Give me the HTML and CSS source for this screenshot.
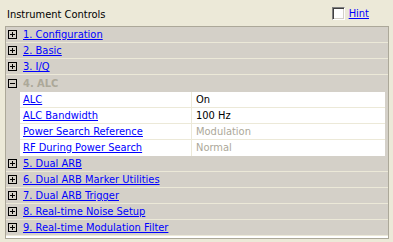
FILE: index.html
```html
<!DOCTYPE html>
<html lang="en">
<head>
  <meta charset="UTF-8">
  <title>Instrument Controls</title>
  <link rel="stylesheet" href="styles.css">
</head>
<body>

  <div class="top-bar">
    <span class="title">Instrument Controls</span>
    <label class="hint">
      <span class="check-box"></span>
      <a href="#">Hint</a>
    </label>
  </div>

  <div class="panel">
    <div class="group">
      <svg class="toggle" width="9" height="9" viewBox="0 0 9 9"><rect x="0.5" y="0.5" width="8" height="8" fill="none" stroke="#000"/><path d="M2 4.5h5M4.5 2v5" stroke="#000"/></svg>
      <a href="#">1. Configuration</a>
    </div>
    <div class="group">
      <svg class="toggle" width="9" height="9" viewBox="0 0 9 9"><rect x="0.5" y="0.5" width="8" height="8" fill="none" stroke="#000"/><path d="M2 4.5h5M4.5 2v5" stroke="#000"/></svg>
      <a href="#">2. Basic</a>
    </div>
    <div class="group">
      <svg class="toggle" width="9" height="9" viewBox="0 0 9 9"><rect x="0.5" y="0.5" width="8" height="8" fill="none" stroke="#000"/><path d="M2 4.5h5M4.5 2v5" stroke="#000"/></svg>
      <a href="#">3. I/Q</a>
    </div>

    <div class="group open">
      <svg class="toggle" width="9" height="9" viewBox="0 0 9 9"><rect x="0.5" y="0.5" width="8" height="8" fill="none" stroke="#000"/><path d="M2 4.5h5" stroke="#000"/></svg>
      <span class="current">4. ALC</span>
    </div>
    <div class="params">
      <div class="param">
        <a class="name" href="#">ALC</a>
        <span class="value">On</span>
      </div>
      <div class="param">
        <a class="name" href="#">ALC Bandwidth</a>
        <span class="value">100 Hz</span>
      </div>
      <div class="param">
        <a class="name" href="#">Power Search Reference</a>
        <span class="value off">Modulation</span>
      </div>
      <div class="param">
        <a class="name" href="#">RF During Power Search</a>
        <span class="value off">Normal</span>
      </div>
    </div>

    <div class="group">
      <svg class="toggle" width="9" height="9" viewBox="0 0 9 9"><rect x="0.5" y="0.5" width="8" height="8" fill="none" stroke="#000"/><path d="M2 4.5h5M4.5 2v5" stroke="#000"/></svg>
      <a href="#">5. Dual ARB</a>
    </div>
    <div class="group">
      <svg class="toggle" width="9" height="9" viewBox="0 0 9 9"><rect x="0.5" y="0.5" width="8" height="8" fill="none" stroke="#000"/><path d="M2 4.5h5M4.5 2v5" stroke="#000"/></svg>
      <a href="#">6. Dual ARB Marker Utilities</a>
    </div>
    <div class="group">
      <svg class="toggle" width="9" height="9" viewBox="0 0 9 9"><rect x="0.5" y="0.5" width="8" height="8" fill="none" stroke="#000"/><path d="M2 4.5h5M4.5 2v5" stroke="#000"/></svg>
      <a href="#">7. Dual ARB Trigger</a>
    </div>
    <div class="group">
      <svg class="toggle" width="9" height="9" viewBox="0 0 9 9"><rect x="0.5" y="0.5" width="8" height="8" fill="none" stroke="#000"/><path d="M2 4.5h5M4.5 2v5" stroke="#000"/></svg>
      <a href="#">8. Real-time Noise Setup</a>
    </div>
    <div class="group">
      <svg class="toggle" width="9" height="9" viewBox="0 0 9 9"><rect x="0.5" y="0.5" width="8" height="8" fill="none" stroke="#000"/><path d="M2 4.5h5M4.5 2v5" stroke="#000"/></svg>
      <a href="#">9. Real-time Modulation Filter</a>
    </div>
  </div>

</body>
</html>
```

FILE: styles.css
```css
/* General */
body {
  margin: 0;
  background: #ece9d8;
  font-family: "DejaVu Sans Condensed", "DejaVu Sans", sans-serif;
  font-size: 11px;
  color: #000;
}

a {
  color: #0000ff;
  text-decoration: underline;
}

/* Top bar */
.top-bar {
  display: flex;
  align-items: center;
  justify-content: space-between;
  height: 26px;
  padding: 0 24px 0 7px;
  box-sizing: border-box;
}

.title {
  padding-top: 2px;
}

.hint {
  display: flex;
  align-items: center;
  gap: 4px;
  margin-top: 1px;
}

.check-box {
  width: 11px;
  height: 11px;
  background: #fff;
  border: 1px solid;
  border-color: #808080 #fff #fff #808080;
  box-shadow: inset 1px 1px 0 #404040, inset -1px -1px 0 #d4d0c8;
}

/* Panel */
.panel {
  margin: 0 4px 0 5px;
  height: 213px;
  border: 1px solid #aca899;
  background: #fff;
  box-sizing: border-box;
}

.group {
  display: flex;
  align-items: center;
  height: 16px;
  padding: 0 0 0 1px;
  background: #d4d0c8;
  border-bottom: 1px solid #ece9d8;
  box-sizing: border-box;
}

.group.open {
  border-bottom: none;
}

.toggle {
  margin: 0 6px 0 1px;
  flex-shrink: 0;
}

.current {
  font-weight: bold;
  color: #aca899;
}

/* Parameters of the open group */
.params {
  background: #d4d0c8;
  padding: 1px 3px 0 14px;
}

.param {
  display: flex;
  height: 16px;
  line-height: 15px;
  background: #fff;
  border-bottom: 1px solid #ece9d8;
  box-sizing: border-box;
}

.param:last-child {
  border-bottom: none;
}

.param .name {
  width: 172px;
  padding-left: 3px;
  border-right: 1px solid #ece9d8;
  box-sizing: border-box;
}

.param .value {
  padding-left: 4px;
}

.value.off {
  color: #aca899;
}
```
